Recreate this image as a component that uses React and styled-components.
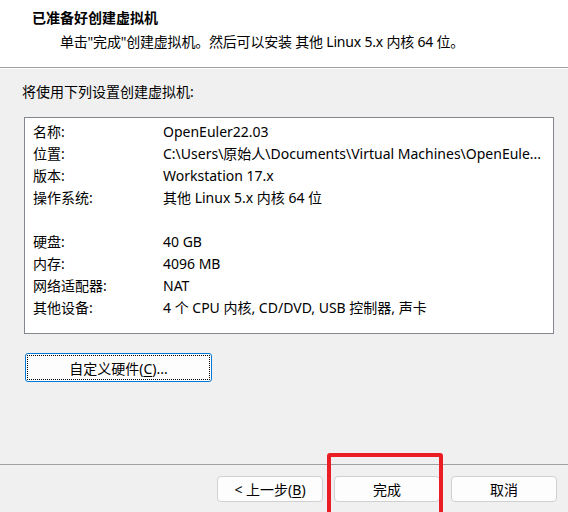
import React from 'react';
import styled, { createGlobalStyle } from 'styled-components';

const GlobalStyle = createGlobalStyle`
  html, body {
    margin: 0;
    padding: 0;
    background: #f0f0f0;
  }
  body {
    font-family: "Noto Sans", "Noto Sans CJK SC", sans-serif;
    font-size: 14px;
    color: #000;
  }
`;

const Window = styled.div`
  position: relative;
  width: 568px;
  height: 512px;
  background: #f0f0f0;
  display: flex;
  flex-direction: column;
  overflow: hidden;
  border-bottom-left-radius: 8px;
  border-bottom-right-radius: 8px;
`;

const Header = styled.header`
  height: 68px;
  background: #fff;
  border-bottom: 1px solid #a0a0a0;
  box-shadow: 0 1px 0 #fff;
  padding: 8px 0 0 32px;
  box-sizing: border-box;
`;

const Title = styled.h1`
  margin: 0;
  font-size: 14px;
  font-weight: 700;
  line-height: 20px;
`;

const Subtitle = styled.p`
  margin: 4px 0 0 28px;
  font-size: 14px;
  line-height: 20px;
  letter-spacing: -0.2px;
`;

const Body = styled.main`
  flex: 1;
  padding: 14px 14px 0 22px;
  display: flex;
  flex-direction: column;
  align-items: flex-start;
`;

const Intro = styled.div`
  line-height: 20px;
`;

const SummaryBox = styled.div`
  margin: 15px 0 0 2px;
  width: 530px;
  box-sizing: border-box;
  height: 217px;
  background: #fff;
  border: 1px solid #828790;
  padding: 3px 9px 0 8px;
`;

const Row = styled.div`
  display: grid;
  grid-template-columns: 130px 1fr;
  height: 22px;
  line-height: 22px;
`;

const Value = styled.span`
  white-space: nowrap;
`;

const CustomButton = styled.button`
  margin: 19px 0 0 3px;
  width: 187px;
  height: 29px;
  position: relative;
  background: #fdfdfd;
  border: 1px solid #0078d7;
  border-radius: 3px;
  font: inherit;
  color: #000;
  padding: 0;

  &::after {
    content: '';
    position: absolute;
    inset: 1px;
    border: 1px dotted #000;
    border-radius: 1px;
  }
`;

const Key = styled.span`
  text-decoration: underline;
  text-underline-offset: 2px;
`;

const Footer = styled.footer`
  height: 48px;
  border-top: 1px solid #a0a0a0;
  display: flex;
  justify-content: flex-end;
  align-items: flex-start;
  gap: 11px;
  padding: 11px 11px 0 0;
  box-sizing: border-box;
`;

const DialogButton = styled.button`
  width: 106px;
  height: 26px;
  background: #fdfdfd;
  border: 1px solid #d0d0d0;
  border-radius: 4px;
  font: inherit;
  color: #000;
  padding: 0;
`;

const Highlight = styled.div`
  position: absolute;
  left: 327px;
  top: 453px;
  width: 116px;
  height: 70px;
  box-sizing: border-box;
  border: 4px solid #ea1c24;
  border-radius: 3px;
  pointer-events: none;
`;

const rows = [
  ['名称:', 'OpenEuler22.03'],
  ['位置:', 'C:\\Users\\原始人\\Documents\\Virtual Machines\\OpenEule...'],
  ['版本:', 'Workstation 17.x'],
  ['操作系统:', '其他 Linux 5.x 内核 64 位'],
  ['', ''],
  ['硬盘:', '40 GB'],
  ['内存:', '4096 MB'],
  ['网络适配器:', 'NAT'],
  ['其他设备:', '4 个 CPU 内核, CD/DVD, USB 控制器, 声卡'],
];

export default function App() {
  return (
    <>
      <GlobalStyle />
      <Window>
        <Header>
          <Title>已准备好创建虚拟机</Title>
          <Subtitle>单击"完成"创建虚拟机。然后可以安装 其他 Linux 5.x 内核 64 位。</Subtitle>
        </Header>
        <Body>
          <Intro>将使用下列设置创建虚拟机:</Intro>
          <SummaryBox>
            {rows.map(([label, value], i) => (
              <Row key={i}>
                <span>{label}</span>
                <Value>{value}</Value>
              </Row>
            ))}
          </SummaryBox>
          <CustomButton>自定义硬件(<Key>C</Key>)...</CustomButton>
        </Body>
        <Footer>
          <DialogButton>&lt; 上一步(<Key>B</Key>)</DialogButton>
          <DialogButton>完成</DialogButton>
          <DialogButton>取消</DialogButton>
        </Footer>
        <Highlight />
      </Window>
    </>
  );
}
